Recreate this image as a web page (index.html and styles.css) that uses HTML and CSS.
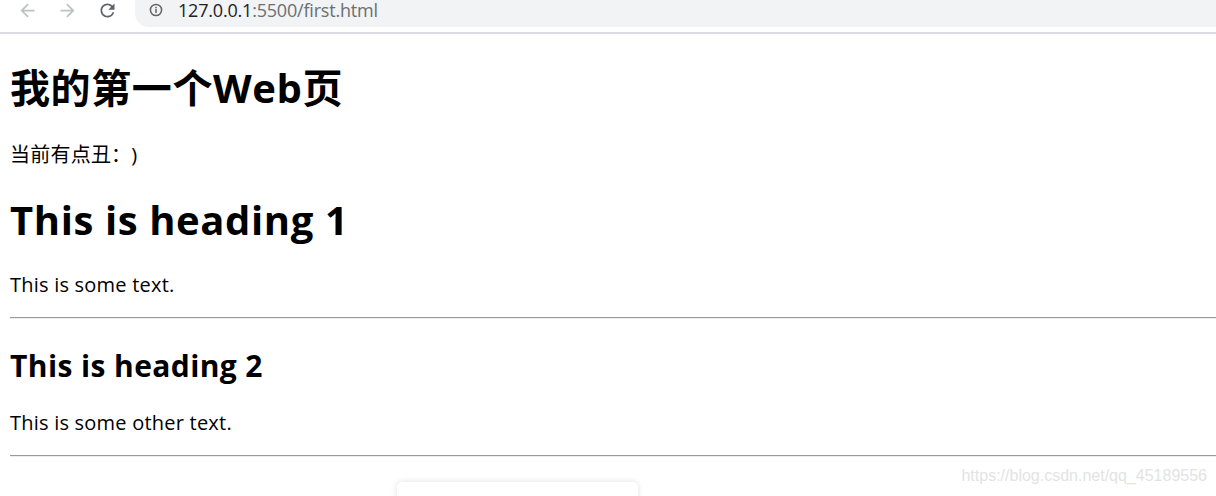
FILE: index.html
```html
<!DOCTYPE html>
<html lang="zh-CN">
<head>
<meta charset="utf-8">
<title>first</title>
<link rel="stylesheet" href="styles.css">
</head>
<body>
<div class="chrome">
  <div class="nav">
    <span class="nav-btn disabled">
      <svg width="21" height="21" viewBox="0 0 24 24"><path d="M20 11H7.83l5.59-5.59L12 4l-8 8 8 8 1.41-1.41L7.83 13H20v-2z" fill="currentColor"/></svg>
    </span>
    <span class="nav-btn disabled">
      <svg width="21" height="21" viewBox="0 0 24 24"><path d="M12 4l-1.41 1.41L16.17 11H4v2h12.17l-5.58 5.59L12 20l8-8z" fill="currentColor"/></svg>
    </span>
    <span class="nav-btn">
      <svg width="21" height="21" viewBox="0 0 24 24"><path d="M17.65 6.35A7.958 7.958 0 0 0 12 4c-4.42 0-7.99 3.58-7.99 8s3.57 8 7.99 8c3.73 0 6.84-2.55 7.73-6h-2.08A5.99 5.99 0 0 1 12 18c-3.31 0-6-2.69-6-6s2.69-6 6-6c1.66 0 3.14.69 4.22 1.78L13 11h7V4l-2.35 2.35z" fill="currentColor"/></svg>
    </span>
  </div>
  <div class="omnibox">
    <svg class="info" width="14" height="14" viewBox="0 0 14 14"><circle cx="7" cy="7" r="5.6" fill="none" stroke="currentColor" stroke-width="1.5"/><rect x="6.25" y="6" width="1.5" height="4" fill="currentColor"/><rect x="6.25" y="3.8" width="1.5" height="1.5" fill="currentColor"/></svg>
    <span class="url"><span class="host">127.0.0.1</span>:5500/first.html</span>
  </div>
</div>
<main class="page">
  <h1 class="title">我的第一个Web页</h1>
  <p class="text cjk">当前有点丑<span class="punct">：</span>)</p>
  <h1 class="heading1">This is heading 1</h1>
  <p class="text">This is some text.</p>
  <hr class="rule">
  <h2 class="heading2">This is heading 2</h2>
  <p class="text">This is some other text.</p>
  <hr class="rule">
</main>
<div class="watermark">https://blog.csdn.net/qq_45189556</div>
<div class="popup"></div>
</body>
</html>
```
FILE: styles.css
```css
html, body {
  margin: 0;
  padding: 0;
  background: #fff;
  overflow: hidden;
}
body {
  font-family: "Open Sans", "Noto Sans CJK SC", sans-serif;
  color: #000;
  height: 496px;
  position: relative;
}
.chrome {
  display: flex;
  align-items: flex-start;
  height: 32px;
  border-bottom: 2px solid #dadce0;
  background: #fff;
}
.nav {
  display: flex;
  align-items: center;
  height: 21px;
  padding-left: 17px;
  gap: 19px;
}
.nav-btn {
  display: flex;
  width: 21px;
  height: 21px;
  align-items: center;
  justify-content: center;
  color: #5f6368;
}
.nav-btn.disabled {
  color: #bdc1c6;
}
.omnibox {
  margin-left: 17px;
  flex: 1;
  height: 27px;
  background: #f1f3f4;
  border-radius: 0 0 0 14px;
  display: flex;
  align-items: flex-start;
  padding-left: 14px;
}
.info {
  color: #5f6368;
  margin-top: 3px;
}
.url {
  margin-left: 15px;
  font-family: "Open Sans", sans-serif;
  font-size: 18px;
  line-height: 20px;
  color: #6b6f73;
  letter-spacing: -0.2px;
}
.host {
  color: #202124;
}
.page {
  padding: 0 0 0 10px;
}
.title {
  font-size: 40px;
  font-weight: bold;
  line-height: 53px;
  margin: 26.8px 0;
  letter-spacing: 0.6px;
}
.heading1 {
  font-size: 40px;
  font-weight: bold;
  line-height: 53px;
  margin: 25px 0 26.8px;
  letter-spacing: 0.6px;
}
.heading2 {
  font-size: 30px;
  font-weight: bold;
  line-height: 40px;
  margin: 27px 0 24px;
  letter-spacing: 0.4px;
}
.text {
  font-size: 20px;
  line-height: 26px;
  margin: 20px 0 19px;
  letter-spacing: 0.22px;
}
.cjk {
  text-spacing-trim: space-all;
}
.punct {
  font-family: "Noto Sans CJK JP", sans-serif;
}
.rule {
  border: none;
  border-top: 1px solid #9a9a9a;
  border-bottom: 1px solid #eeeeee;
  height: 0;
  margin: 10px 0;
}
.watermark {
  position: absolute;
  right: 9px;
  top: 467px;
  font-family: "Liberation Sans", Arial, sans-serif;
  font-size: 16px;
  color: #e3e3e3;
}
.popup {
  position: absolute;
  left: 397px;
  top: 482px;
  width: 241px;
  height: 40px;
  background: #fff;
  border-radius: 5px;
  box-shadow: 0 0 6px rgba(0, 0, 0, 0.12);
}
```
